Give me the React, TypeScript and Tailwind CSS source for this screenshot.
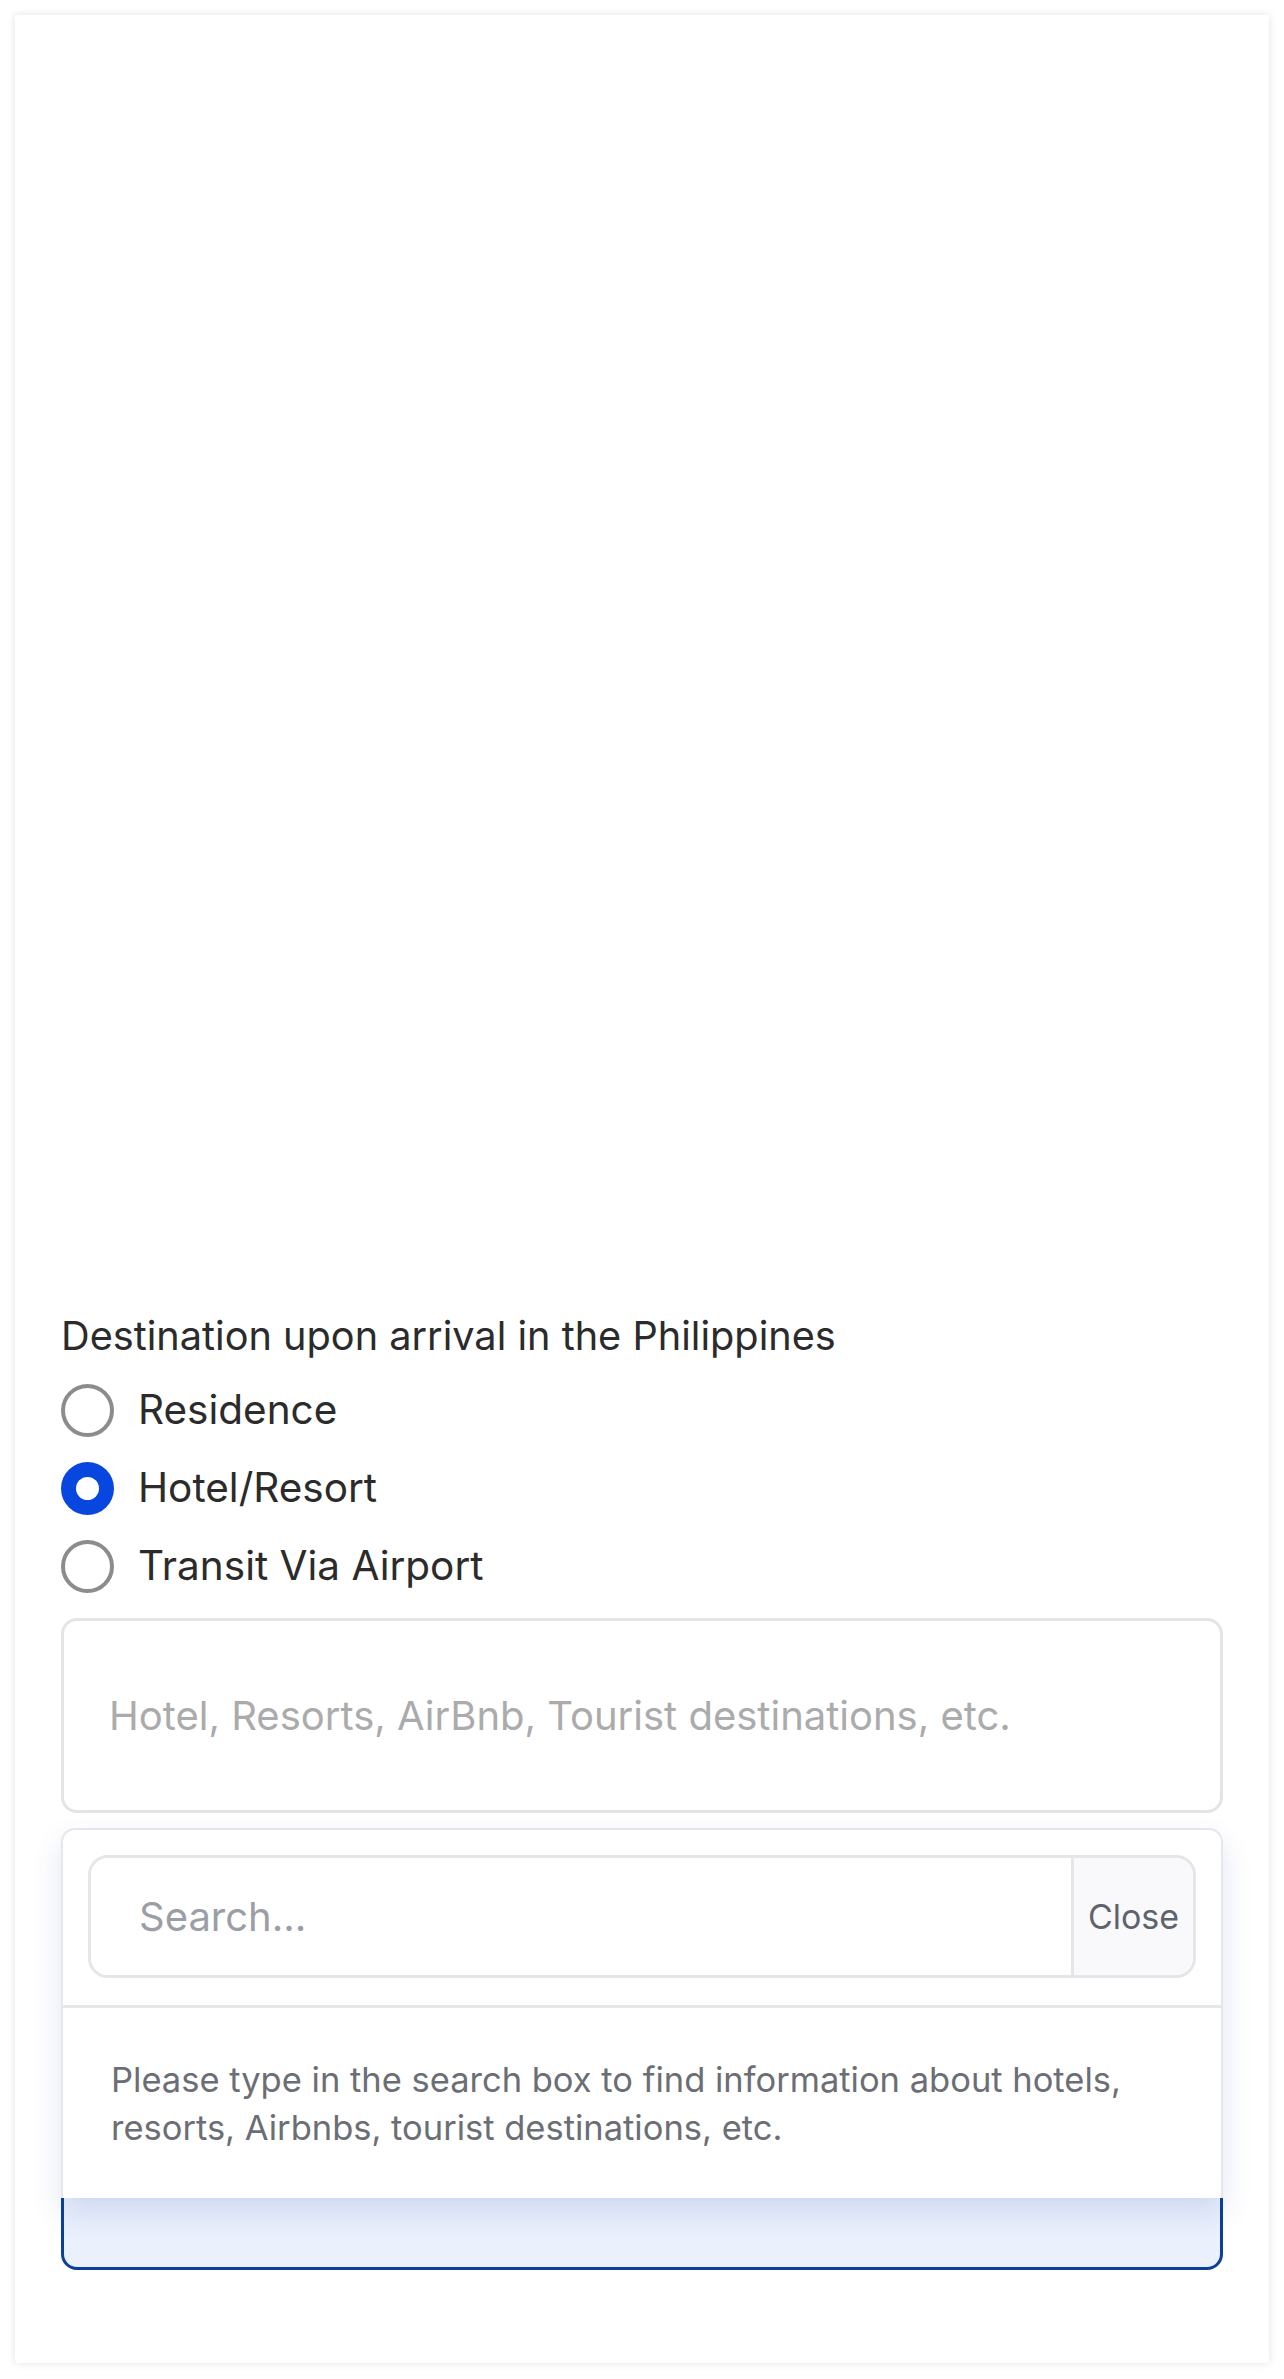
import React, { useState } from 'react';

const options = ['Residence', 'Hotel/Resort', 'Transit Via Airport'];

const Radio = ({ label, checked, onSelect }: { label: string; checked: boolean; onSelect: () => void }) => (
  <button type="button" onClick={onSelect} className="flex h-[78px] items-center gap-[24px] text-left">
    {checked ? (
      <span className="flex h-[53px] w-[53px] items-center justify-center rounded-full bg-[#0846e0]">
        <span className="h-[23px] w-[23px] rounded-full bg-white" />
      </span>
    ) : (
      <span className="h-[53px] w-[53px] rounded-full border-[4px] border-[#8c8c8c] bg-white" />
    )}
    <span className="text-[40.5px] leading-none text-[#2b2b2b]">{label}</span>
  </button>
);

const App = () => {
  const [selected, setSelected] = useState('Hotel/Resort');

  return (
    <div className="min-h-screen bg-white p-[15px] font-['Inter',sans-serif]">
      <div className="h-[2348px] rounded-[3px] bg-white px-[46px] shadow-[0_0_8px_rgba(0,0,0,0.12)]">
        {/* empty area above the form (map/iframe not rendered) */}
        <div className="h-[1294px]" />

        <p className="text-[39.7px] leading-[54px] text-[#2b2b2b]">Destination upon arrival in the Philippines</p>

        <div className="mt-[8px] flex flex-col">
          {options.map((o) => (
            <Radio key={o} label={o} checked={selected === o} onSelect={() => setSelected(o)} />
          ))}
        </div>

        <div className="relative mt-[13px]">
          <div className="flex h-[195px] items-center rounded-[16px] border-[3px] border-[#e4e4e4] bg-white px-[45px]">
            <span className="text-[40px] text-[#ababab]">Hotel, Resorts, AirBnb, Tourist destinations, etc.</span>
          </div>

          {/* next field, focused, mostly covered by the dropdown */}
          <div className="mt-[262px] h-[195px] rounded-[16px] border-[3px] border-[#0b3f9c] bg-[#eaf0fc]" />

          {/* search dropdown */}
          <div className="absolute left-0 right-0 top-[210px] h-[370px] rounded-t-[14px] border-[2px] border-b-0 border-[#e6e7ec] bg-white shadow-[0_14px_30px_rgba(40,70,180,0.14)]">
            <div className="px-[25px] pt-[25px]">
              <div className="flex h-[123px] overflow-hidden rounded-[20px] border-[3px] border-[#e5e6ea]">
                <div className="flex flex-1 items-center bg-white px-[48px]">
                  <span className="text-[40px] text-[#9c9ea6]">Search...</span>
                </div>
                <div className="flex w-[122px] items-center justify-center border-l-[3px] border-[#e5e6ea] bg-[#f9f9fc]">
                  <span className="text-[34px] text-[#5f636b]">Close</span>
                </div>
              </div>
            </div>
            <div className="mt-[27px] border-t-[3px] border-[#e6e6e8] px-[48px] pt-[48px]">
              <p className="text-[34.5px] leading-[48px] text-[#6b6e75]">
                Please type in the search box to find information about hotels, resorts, Airbnbs, tourist destinations, etc.
              </p>
            </div>
          </div>
        </div>
      </div>
    </div>
  );
};

export default App;
